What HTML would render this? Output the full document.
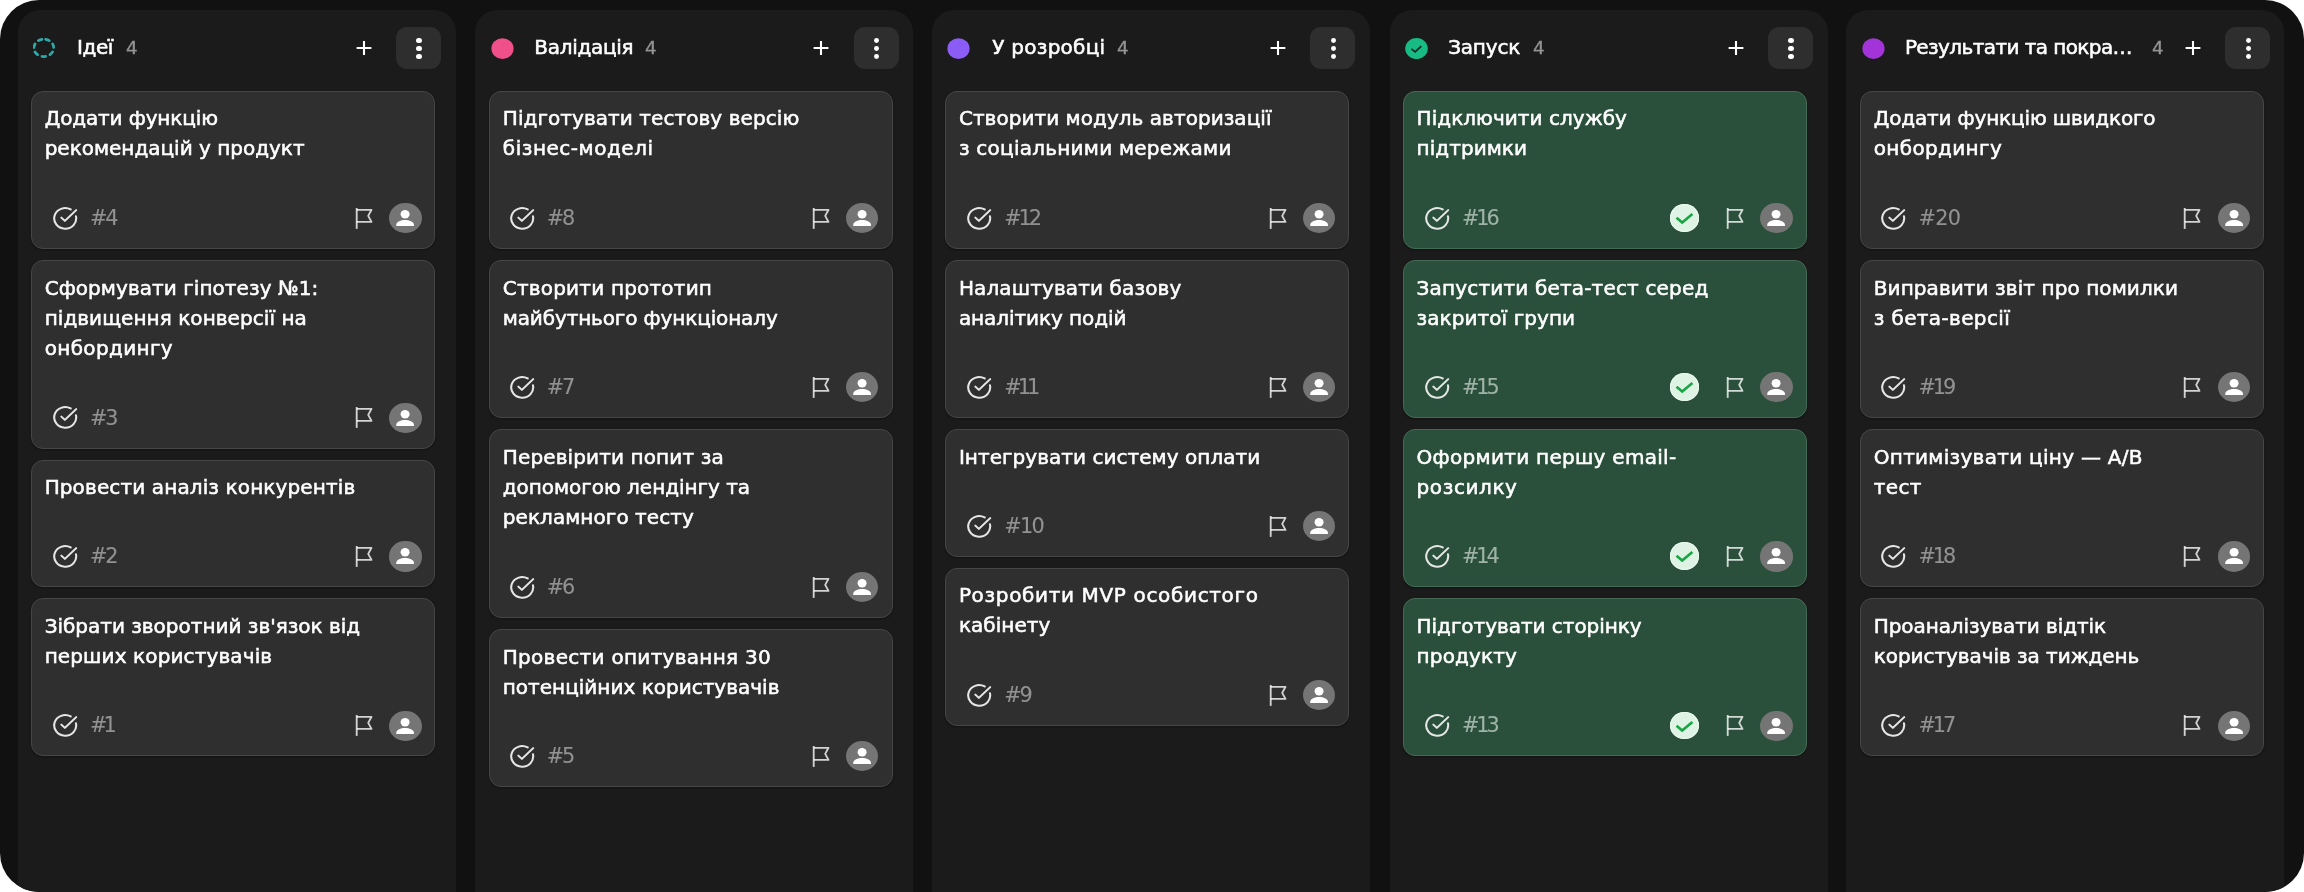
<!DOCTYPE html><html lang="uk"><head><meta charset="utf-8"><title>Kanban</title><style>
*{box-sizing:border-box;margin:0;padding:0}
html,body{width:2304px;height:892px;background:#fff;overflow:hidden}
body{font-family:"DejaVu Sans","Liberation Sans",sans-serif;color:#fff}
#board{position:absolute;left:0;top:0;width:2304px;height:892px;background:#111;border-radius:39px;overflow:hidden}
.col{will-change:transform;position:absolute;top:10px;height:920px;width:437.5px;background:#1b1b1b;border-radius:22px}
.hd{position:absolute;top:0;width:437px;height:80px}
.ttl{position:absolute;left:59.1px;top:24.9px;font-size:20px;-webkit-text-stroke:0.55px #fff;line-height:24px;white-space:nowrap;color:#fff}
.cnt{position:absolute;top:25.8px;font-size:17px;line-height:24px;color:#939393;-webkit-text-stroke:0.3px #939393;transform:scaleX(1.08);transform-origin:0 50%}
.ico{position:absolute;left:15.2px;top:27.7px;width:23px;height:21.2px}
.plus{position:absolute;top:30.1px;width:16px;height:16px}
.more{position:absolute;left:378.3px;top:17.2px;width:44.9px;height:41.5px;border-radius:11px;background:#2e2e2e}
.more i{position:absolute;left:20.1px;width:5.2px;height:5px;border-radius:50%;background:#fff}
.card{position:absolute;width:404px;background:#2f2f2f;border:1px solid #464646;border-radius:12px;box-shadow:0 1px 2px rgba(0,0,0,.35)}
.card.g{background:#2a503b;border-color:#456a56}
.l{position:absolute;left:12.6px;font-size:20px;-webkit-text-stroke:0.55px #fff;line-height:30px;height:30px;white-space:nowrap;color:#fff}
.tk{position:absolute;left:19.8px;width:26.4px;height:24.8px}
.num{position:absolute;left:57.9px;font-size:20.8px;line-height:24px;letter-spacing:-0.7px;-webkit-text-stroke:0.1px;color:#929292;white-space:nowrap}
.card.g .num{color:#9fb3a7}
.flag{position:absolute;left:322px;width:20px;height:24px}
.av{position:absolute;left:357.4px;width:32.2px;height:30.2px;border-radius:50%;background:#757575;overflow:hidden}
.ok{position:absolute;left:266.7px;width:29px;height:27.6px;border-radius:50%;background:#def3e4;box-shadow:inset 0 0 0 1px #e9faee}
</style></head><body><div id="board">
<div class="col" style="left:18.05px">
<div class="hd" style="left:0px">
<svg class="ico" viewBox="0 0 23 21.2" fill="none"><ellipse cx="10.8" cy="9.9" rx="8.7" ry="9.9" transform="rotate(-93 10.8 9.9)" stroke="#2eaaab" stroke-width="2.7" stroke-linecap="round" stroke-dasharray="3.7 4.72" stroke-dashoffset="-2.4"/></svg>
<div class="ttl" style="left:59.1px;letter-spacing:-0.433px">Ідеї</div>
<div class="cnt" style="left:108.0px">4</div>
<svg class="plus" style="left:337.8px" viewBox="0 0 16 16" fill="none" stroke="#fff" stroke-width="2.1" stroke-linecap="butt"><path d="M8 1.1v13.8M0.6 8h14.8"/></svg>
<div class="more"><i style="top:10.6px"></i><i style="top:18.6px"></i><i style="top:26.6px"></i></div>
</div>
<div class="card" style="left:13.05px;top:80.60px;height:158.3px">
<div class="l" style="top:11.56px;letter-spacing:-0.13px">Додати функцію</div>
<div class="l" style="top:41.56px;letter-spacing:-0.002px">рекомендацій у продукт</div>
<svg class="tk" style="top:114.2px;margin-left:0px" preserveAspectRatio="none" viewBox="0 0 24 24" fill="none" stroke="#e6e6e6" stroke-width="1.9" stroke-linecap="round" stroke-linejoin="round"><path d="M21.8 10A10 10 0 1 1 17 3.34"/><path d="M8.5 11.2l3.2 3.2L22 4"/></svg>
<div class="num" style="top:114.3px;margin-left:0px;letter-spacing:-2.15px">#4</div>
<svg class="flag" style="top:114.1px;margin-left:0px" viewBox="0 0 20 24" fill="none" stroke="rgba(255,255,255,.79)" stroke-width="1.85" stroke-linejoin="round" stroke-linecap="butt"><path d="M2.7 2v20.9"/><path d="M2.7 3.8H17.5L14.2 9.9l3.3 6H2.7"/></svg>
<div class="av" style="top:111.4px;margin-left:0px"><svg width="32.2" height="30.2" preserveAspectRatio="none" viewBox="0 0 33 33" style="display:block"><circle cx="16.5" cy="12.3" r="4.6" fill="#fff"/><path d="M7.4 24.2c0-4 5-5.6 9.1-5.6s9.1 1.6 9.1 5.6v0.9H7.4z" fill="#fff"/></svg></div>
</div>
<div class="card" style="left:13.05px;top:249.80px;height:188.8px">
<div class="l" style="top:12.36px;letter-spacing:0.059px">Сформувати гіпотезу №1:</div>
<div class="l" style="top:42.36px;letter-spacing:0.058px">підвищення конверсії на</div>
<div class="l" style="top:72.36px;letter-spacing:0.348px">онбордингу</div>
<svg class="tk" style="top:144.7px;margin-left:0px" preserveAspectRatio="none" viewBox="0 0 24 24" fill="none" stroke="#e6e6e6" stroke-width="1.9" stroke-linecap="round" stroke-linejoin="round"><path d="M21.8 10A10 10 0 1 1 17 3.34"/><path d="M8.5 11.2l3.2 3.2L22 4"/></svg>
<div class="num" style="top:144.8px;margin-left:0px;letter-spacing:-2.15px">#3</div>
<svg class="flag" style="top:144.6px;margin-left:0px" viewBox="0 0 20 24" fill="none" stroke="rgba(255,255,255,.79)" stroke-width="1.85" stroke-linejoin="round" stroke-linecap="butt"><path d="M2.7 2v20.9"/><path d="M2.7 3.8H17.5L14.2 9.9l3.3 6H2.7"/></svg>
<div class="av" style="top:141.9px;margin-left:0px"><svg width="32.2" height="30.2" preserveAspectRatio="none" viewBox="0 0 33 33" style="display:block"><circle cx="16.5" cy="12.3" r="4.6" fill="#fff"/><path d="M7.4 24.2c0-4 5-5.6 9.1-5.6s9.1 1.6 9.1 5.6v0.9H7.4z" fill="#fff"/></svg></div>
</div>
<div class="card" style="left:13.05px;top:449.50px;height:127.8px">
<div class="l" style="top:11.66px;letter-spacing:0.123px">Провести аналіз конкурентів</div>
<svg class="tk" style="top:83.7px;margin-left:0px" preserveAspectRatio="none" viewBox="0 0 24 24" fill="none" stroke="#e6e6e6" stroke-width="1.9" stroke-linecap="round" stroke-linejoin="round"><path d="M21.8 10A10 10 0 1 1 17 3.34"/><path d="M8.5 11.2l3.2 3.2L22 4"/></svg>
<div class="num" style="top:83.8px;margin-left:0px;letter-spacing:-2.15px">#2</div>
<svg class="flag" style="top:83.6px;margin-left:0px" viewBox="0 0 20 24" fill="none" stroke="rgba(255,255,255,.79)" stroke-width="1.85" stroke-linejoin="round" stroke-linecap="butt"><path d="M2.7 2v20.9"/><path d="M2.7 3.8H17.5L14.2 9.9l3.3 6H2.7"/></svg>
<div class="av" style="top:80.9px;margin-left:0px"><svg width="32.2" height="30.2" preserveAspectRatio="none" viewBox="0 0 33 33" style="display:block"><circle cx="16.5" cy="12.3" r="4.6" fill="#fff"/><path d="M7.4 24.2c0-4 5-5.6 9.1-5.6s9.1 1.6 9.1 5.6v0.9H7.4z" fill="#fff"/></svg></div>
</div>
<div class="card" style="left:13.05px;top:588.20px;height:158.3px">
<div class="l" style="top:11.96px;letter-spacing:-0.012px">Зібрати зворотний зв'язок від</div>
<div class="l" style="top:41.96px;letter-spacing:0.125px">перших користувачів</div>
<svg class="tk" style="top:114.2px;margin-left:0px" preserveAspectRatio="none" viewBox="0 0 24 24" fill="none" stroke="#e6e6e6" stroke-width="1.9" stroke-linecap="round" stroke-linejoin="round"><path d="M21.8 10A10 10 0 1 1 17 3.34"/><path d="M8.5 11.2l3.2 3.2L22 4"/></svg>
<div class="num" style="top:114.3px;margin-left:0px;letter-spacing:-3.8px">#1</div>
<svg class="flag" style="top:114.1px;margin-left:0px" viewBox="0 0 20 24" fill="none" stroke="rgba(255,255,255,.79)" stroke-width="1.85" stroke-linejoin="round" stroke-linecap="butt"><path d="M2.7 2v20.9"/><path d="M2.7 3.8H17.5L14.2 9.9l3.3 6H2.7"/></svg>
<div class="av" style="top:111.4px;margin-left:0px"><svg width="32.2" height="30.2" preserveAspectRatio="none" viewBox="0 0 33 33" style="display:block"><circle cx="16.5" cy="12.3" r="4.6" fill="#fff"/><path d="M7.4 24.2c0-4 5-5.6 9.1-5.6s9.1 1.6 9.1 5.6v0.9H7.4z" fill="#fff"/></svg></div>
</div>
</div>
<div class="col" style="left:474.5px">
<div class="hd" style="left:0.7px">
<svg class="ico" viewBox="0 0 23 21.2"><ellipse cx="11.5" cy="10.6" rx="11.1" ry="10.4" fill="#f0508a"/></svg>
<div class="ttl" style="left:58.6px;letter-spacing:-0.3px">Валідація</div>
<div class="cnt" style="left:169.6px">4</div>
<svg class="plus" style="left:337.8px" viewBox="0 0 16 16" fill="none" stroke="#fff" stroke-width="2.1" stroke-linecap="butt"><path d="M8 1.1v13.8M0.6 8h14.8"/></svg>
<div class="more"><i style="top:10.6px"></i><i style="top:18.6px"></i><i style="top:26.6px"></i></div>
</div>
<div class="card" style="left:14.20px;top:80.60px;height:158.3px">
<div class="l" style="top:11.56px;letter-spacing:0.07px">Підготувати тестову версію</div>
<div class="l" style="top:41.56px;letter-spacing:0.531px">бізнес-моделі</div>
<svg class="tk" style="top:114.2px;margin-left:-1.3px" preserveAspectRatio="none" viewBox="0 0 24 24" fill="none" stroke="#e6e6e6" stroke-width="1.9" stroke-linecap="round" stroke-linejoin="round"><path d="M21.8 10A10 10 0 1 1 17 3.34"/><path d="M8.5 11.2l3.2 3.2L22 4"/></svg>
<div class="num" style="top:114.3px;margin-left:-1.3px;letter-spacing:-2.15px">#8</div>
<svg class="flag" style="top:114.1px;margin-left:-1.5px" viewBox="0 0 20 24" fill="none" stroke="rgba(255,255,255,.79)" stroke-width="1.85" stroke-linejoin="round" stroke-linecap="butt"><path d="M2.7 2v20.9"/><path d="M2.7 3.8H17.5L14.2 9.9l3.3 6H2.7"/></svg>
<div class="av" style="top:111.4px;margin-left:-1.5px"><svg width="32.2" height="30.2" preserveAspectRatio="none" viewBox="0 0 33 33" style="display:block"><circle cx="16.5" cy="12.3" r="4.6" fill="#fff"/><path d="M7.4 24.2c0-4 5-5.6 9.1-5.6s9.1 1.6 9.1 5.6v0.9H7.4z" fill="#fff"/></svg></div>
</div>
<div class="card" style="left:14.20px;top:249.80px;height:158.3px">
<div class="l" style="top:12.36px;letter-spacing:0.198px">Створити прототип</div>
<div class="l" style="top:42.36px;letter-spacing:-0.13px">майбутнього функціоналу</div>
<svg class="tk" style="top:114.2px;margin-left:-1.3px" preserveAspectRatio="none" viewBox="0 0 24 24" fill="none" stroke="#e6e6e6" stroke-width="1.9" stroke-linecap="round" stroke-linejoin="round"><path d="M21.8 10A10 10 0 1 1 17 3.34"/><path d="M8.5 11.2l3.2 3.2L22 4"/></svg>
<div class="num" style="top:114.3px;margin-left:-1.3px;letter-spacing:-2.15px">#7</div>
<svg class="flag" style="top:114.1px;margin-left:-1.5px" viewBox="0 0 20 24" fill="none" stroke="rgba(255,255,255,.79)" stroke-width="1.85" stroke-linejoin="round" stroke-linecap="butt"><path d="M2.7 2v20.9"/><path d="M2.7 3.8H17.5L14.2 9.9l3.3 6H2.7"/></svg>
<div class="av" style="top:111.4px;margin-left:-1.5px"><svg width="32.2" height="30.2" preserveAspectRatio="none" viewBox="0 0 33 33" style="display:block"><circle cx="16.5" cy="12.3" r="4.6" fill="#fff"/><path d="M7.4 24.2c0-4 5-5.6 9.1-5.6s9.1 1.6 9.1 5.6v0.9H7.4z" fill="#fff"/></svg></div>
</div>
<div class="card" style="left:14.20px;top:419.00px;height:188.8px">
<div class="l" style="top:12.16px;letter-spacing:0.126px">Перевірити попит за</div>
<div class="l" style="top:42.16px;letter-spacing:-0.03px">допомогою лендінгу та</div>
<div class="l" style="top:72.16px;letter-spacing:0.064px">рекламного тесту</div>
<svg class="tk" style="top:144.7px;margin-left:-1.3px" preserveAspectRatio="none" viewBox="0 0 24 24" fill="none" stroke="#e6e6e6" stroke-width="1.9" stroke-linecap="round" stroke-linejoin="round"><path d="M21.8 10A10 10 0 1 1 17 3.34"/><path d="M8.5 11.2l3.2 3.2L22 4"/></svg>
<div class="num" style="top:144.8px;margin-left:-1.3px;letter-spacing:-2.15px">#6</div>
<svg class="flag" style="top:144.6px;margin-left:-1.5px" viewBox="0 0 20 24" fill="none" stroke="rgba(255,255,255,.79)" stroke-width="1.85" stroke-linejoin="round" stroke-linecap="butt"><path d="M2.7 2v20.9"/><path d="M2.7 3.8H17.5L14.2 9.9l3.3 6H2.7"/></svg>
<div class="av" style="top:141.9px;margin-left:-1.5px"><svg width="32.2" height="30.2" preserveAspectRatio="none" viewBox="0 0 33 33" style="display:block"><circle cx="16.5" cy="12.3" r="4.6" fill="#fff"/><path d="M7.4 24.2c0-4 5-5.6 9.1-5.6s9.1 1.6 9.1 5.6v0.9H7.4z" fill="#fff"/></svg></div>
</div>
<div class="card" style="left:14.20px;top:618.70px;height:158.3px">
<div class="l" style="top:12.46px;letter-spacing:0.291px">Провести опитування 30</div>
<div class="l" style="top:42.46px;letter-spacing:0.007px">потенційних користувачів</div>
<svg class="tk" style="top:114.2px;margin-left:-1.3px" preserveAspectRatio="none" viewBox="0 0 24 24" fill="none" stroke="#e6e6e6" stroke-width="1.9" stroke-linecap="round" stroke-linejoin="round"><path d="M21.8 10A10 10 0 1 1 17 3.34"/><path d="M8.5 11.2l3.2 3.2L22 4"/></svg>
<div class="num" style="top:114.3px;margin-left:-1.3px;letter-spacing:-2.15px">#5</div>
<svg class="flag" style="top:114.1px;margin-left:-1.5px" viewBox="0 0 20 24" fill="none" stroke="rgba(255,255,255,.79)" stroke-width="1.85" stroke-linejoin="round" stroke-linecap="butt"><path d="M2.7 2v20.9"/><path d="M2.7 3.8H17.5L14.2 9.9l3.3 6H2.7"/></svg>
<div class="av" style="top:111.4px;margin-left:-1.5px"><svg width="32.2" height="30.2" preserveAspectRatio="none" viewBox="0 0 33 33" style="display:block"><circle cx="16.5" cy="12.3" r="4.6" fill="#fff"/><path d="M7.4 24.2c0-4 5-5.6 9.1-5.6s9.1 1.6 9.1 5.6v0.9H7.4z" fill="#fff"/></svg></div>
</div>
</div>
<div class="col" style="left:931.8px">
<div class="hd" style="left:0.2px">
<svg class="ico" viewBox="0 0 23 21.2"><ellipse cx="11.5" cy="10.6" rx="11.1" ry="10.4" fill="#8b5cf6"/></svg>
<div class="ttl" style="left:60.0px;letter-spacing:0.267px">У розробці</div>
<div class="cnt" style="left:185.0px">4</div>
<svg class="plus" style="left:337.8px" viewBox="0 0 16 16" fill="none" stroke="#fff" stroke-width="2.1" stroke-linecap="butt"><path d="M8 1.1v13.8M0.6 8h14.8"/></svg>
<div class="more"><i style="top:10.6px"></i><i style="top:18.6px"></i><i style="top:26.6px"></i></div>
</div>
<div class="card" style="left:13.30px;top:80.60px;height:158.3px">
<div class="l" style="top:11.56px;letter-spacing:0.042px">Створити модуль авторизації</div>
<div class="l" style="top:41.56px;letter-spacing:0.238px">з соціальними мережами</div>
<svg class="tk" style="top:114.2px;margin-left:0px" preserveAspectRatio="none" viewBox="0 0 24 24" fill="none" stroke="#e6e6e6" stroke-width="1.9" stroke-linecap="round" stroke-linejoin="round"><path d="M21.8 10A10 10 0 1 1 17 3.34"/><path d="M8.5 11.2l3.2 3.2L22 4"/></svg>
<div class="num" style="top:114.3px;margin-left:0px;letter-spacing:-3.05px">#12</div>
<svg class="flag" style="top:114.1px;margin-left:-0.5px" viewBox="0 0 20 24" fill="none" stroke="rgba(255,255,255,.79)" stroke-width="1.85" stroke-linejoin="round" stroke-linecap="butt"><path d="M2.7 2v20.9"/><path d="M2.7 3.8H17.5L14.2 9.9l3.3 6H2.7"/></svg>
<div class="av" style="top:111.4px;margin-left:-0.5px"><svg width="32.2" height="30.2" preserveAspectRatio="none" viewBox="0 0 33 33" style="display:block"><circle cx="16.5" cy="12.3" r="4.6" fill="#fff"/><path d="M7.4 24.2c0-4 5-5.6 9.1-5.6s9.1 1.6 9.1 5.6v0.9H7.4z" fill="#fff"/></svg></div>
</div>
<div class="card" style="left:13.30px;top:249.80px;height:158.3px">
<div class="l" style="top:12.36px;letter-spacing:0.126px">Налаштувати базову</div>
<div class="l" style="top:42.36px;letter-spacing:-0.071px">аналітику подій</div>
<svg class="tk" style="top:114.2px;margin-left:0px" preserveAspectRatio="none" viewBox="0 0 24 24" fill="none" stroke="#e6e6e6" stroke-width="1.9" stroke-linecap="round" stroke-linejoin="round"><path d="M21.8 10A10 10 0 1 1 17 3.34"/><path d="M8.5 11.2l3.2 3.2L22 4"/></svg>
<div class="num" style="top:114.3px;margin-left:0px;letter-spacing:-3.9px">#11</div>
<svg class="flag" style="top:114.1px;margin-left:-0.5px" viewBox="0 0 20 24" fill="none" stroke="rgba(255,255,255,.79)" stroke-width="1.85" stroke-linejoin="round" stroke-linecap="butt"><path d="M2.7 2v20.9"/><path d="M2.7 3.8H17.5L14.2 9.9l3.3 6H2.7"/></svg>
<div class="av" style="top:111.4px;margin-left:-0.5px"><svg width="32.2" height="30.2" preserveAspectRatio="none" viewBox="0 0 33 33" style="display:block"><circle cx="16.5" cy="12.3" r="4.6" fill="#fff"/><path d="M7.4 24.2c0-4 5-5.6 9.1-5.6s9.1 1.6 9.1 5.6v0.9H7.4z" fill="#fff"/></svg></div>
</div>
<div class="card" style="left:13.30px;top:419.00px;height:127.8px">
<div class="l" style="top:12.16px;letter-spacing:0.044px">Інтегрувати систему оплати</div>
<svg class="tk" style="top:83.7px;margin-left:0px" preserveAspectRatio="none" viewBox="0 0 24 24" fill="none" stroke="#e6e6e6" stroke-width="1.9" stroke-linecap="round" stroke-linejoin="round"><path d="M21.8 10A10 10 0 1 1 17 3.34"/><path d="M8.5 11.2l3.2 3.2L22 4"/></svg>
<div class="num" style="top:83.8px;margin-left:0px;letter-spacing:-1.7px">#10</div>
<svg class="flag" style="top:83.6px;margin-left:-0.5px" viewBox="0 0 20 24" fill="none" stroke="rgba(255,255,255,.79)" stroke-width="1.85" stroke-linejoin="round" stroke-linecap="butt"><path d="M2.7 2v20.9"/><path d="M2.7 3.8H17.5L14.2 9.9l3.3 6H2.7"/></svg>
<div class="av" style="top:80.9px;margin-left:-0.5px"><svg width="32.2" height="30.2" preserveAspectRatio="none" viewBox="0 0 33 33" style="display:block"><circle cx="16.5" cy="12.3" r="4.6" fill="#fff"/><path d="M7.4 24.2c0-4 5-5.6 9.1-5.6s9.1 1.6 9.1 5.6v0.9H7.4z" fill="#fff"/></svg></div>
</div>
<div class="card" style="left:13.30px;top:557.70px;height:158.3px">
<div class="l" style="top:11.46px;letter-spacing:0.652px">Розробити MVP особистого</div>
<div class="l" style="top:41.46px;letter-spacing:0.038px">кабінету</div>
<svg class="tk" style="top:114.2px;margin-left:0px" preserveAspectRatio="none" viewBox="0 0 24 24" fill="none" stroke="#e6e6e6" stroke-width="1.9" stroke-linecap="round" stroke-linejoin="round"><path d="M21.8 10A10 10 0 1 1 17 3.34"/><path d="M8.5 11.2l3.2 3.2L22 4"/></svg>
<div class="num" style="top:114.3px;margin-left:0px;letter-spacing:-2.15px">#9</div>
<svg class="flag" style="top:114.1px;margin-left:-0.5px" viewBox="0 0 20 24" fill="none" stroke="rgba(255,255,255,.79)" stroke-width="1.85" stroke-linejoin="round" stroke-linecap="butt"><path d="M2.7 2v20.9"/><path d="M2.7 3.8H17.5L14.2 9.9l3.3 6H2.7"/></svg>
<div class="av" style="top:111.4px;margin-left:-0.5px"><svg width="32.2" height="30.2" preserveAspectRatio="none" viewBox="0 0 33 33" style="display:block"><circle cx="16.5" cy="12.3" r="4.6" fill="#fff"/><path d="M7.4 24.2c0-4 5-5.6 9.1-5.6s9.1 1.6 9.1 5.6v0.9H7.4z" fill="#fff"/></svg></div>
</div>
</div>
<div class="col" style="left:1390.0px">
<div class="hd" style="left:0px">
<svg class="ico" viewBox="0 0 23 21.2" fill="none"><ellipse cx="11.5" cy="10.6" rx="11.3" ry="10.5" fill="#19bb84"/><path d="M6.4 10.9l3.7 3.0 6.2-5.8" stroke="#0f2a20" stroke-width="1.8" stroke-linecap="butt" stroke-linejoin="miter"/></svg>
<div class="ttl" style="left:58.2px;letter-spacing:-0.2px">Запуск</div>
<div class="cnt" style="left:142.6px">4</div>
<svg class="plus" style="left:337.8px" viewBox="0 0 16 16" fill="none" stroke="#fff" stroke-width="2.1" stroke-linecap="butt"><path d="M8 1.1v13.8M0.6 8h14.8"/></svg>
<div class="more"><i style="top:10.6px"></i><i style="top:18.6px"></i><i style="top:26.6px"></i></div>
</div>
<div class="card g" style="left:13.00px;top:80.60px;height:158.3px">
<div class="l" style="top:11.56px;letter-spacing:0.037px">Підключити службу</div>
<div class="l" style="top:41.56px;letter-spacing:0.046px">підтримки</div>
<svg class="tk" style="top:114.2px;margin-left:0px" preserveAspectRatio="none" viewBox="0 0 24 24" fill="none" stroke="#e6e6e6" stroke-width="1.9" stroke-linecap="round" stroke-linejoin="round"><path d="M21.8 10A10 10 0 1 1 17 3.34"/><path d="M8.5 11.2l3.2 3.2L22 4"/></svg>
<div class="num" style="top:114.3px;margin-left:0px;letter-spacing:-3.05px">#16</div>
<div class="ok" style="top:112.4px;margin-left:-1.0px"><svg width="29" height="27.6" viewBox="0 0 29 27.6" fill="none" stroke="#1aa544" stroke-width="2.6" stroke-linecap="butt" stroke-linejoin="miter" style="display:block"><path d="M6.5 13.8l5.7 4.8 10.2-8.7"/></svg></div>
<svg class="flag" style="top:114.1px;margin-left:-1.0px" viewBox="0 0 20 24" fill="none" stroke="rgba(255,255,255,.79)" stroke-width="1.85" stroke-linejoin="round" stroke-linecap="butt"><path d="M2.7 2v20.9"/><path d="M2.7 3.8H17.5L14.2 9.9l3.3 6H2.7"/></svg>
<div class="av" style="top:111.4px;margin-left:-1.0px"><svg width="32.2" height="30.2" preserveAspectRatio="none" viewBox="0 0 33 33" style="display:block"><circle cx="16.5" cy="12.3" r="4.6" fill="#fff"/><path d="M7.4 24.2c0-4 5-5.6 9.1-5.6s9.1 1.6 9.1 5.6v0.9H7.4z" fill="#fff"/></svg></div>
</div>
<div class="card g" style="left:13.00px;top:249.80px;height:158.3px">
<div class="l" style="top:12.36px;letter-spacing:0.173px">Запустити бета-тест серед</div>
<div class="l" style="top:42.36px;letter-spacing:0.066px">закритої групи</div>
<svg class="tk" style="top:114.2px;margin-left:0px" preserveAspectRatio="none" viewBox="0 0 24 24" fill="none" stroke="#e6e6e6" stroke-width="1.9" stroke-linecap="round" stroke-linejoin="round"><path d="M21.8 10A10 10 0 1 1 17 3.34"/><path d="M8.5 11.2l3.2 3.2L22 4"/></svg>
<div class="num" style="top:114.3px;margin-left:0px;letter-spacing:-3.05px">#15</div>
<div class="ok" style="top:112.4px;margin-left:-1.0px"><svg width="29" height="27.6" viewBox="0 0 29 27.6" fill="none" stroke="#1aa544" stroke-width="2.6" stroke-linecap="butt" stroke-linejoin="miter" style="display:block"><path d="M6.5 13.8l5.7 4.8 10.2-8.7"/></svg></div>
<svg class="flag" style="top:114.1px;margin-left:-1.0px" viewBox="0 0 20 24" fill="none" stroke="rgba(255,255,255,.79)" stroke-width="1.85" stroke-linejoin="round" stroke-linecap="butt"><path d="M2.7 2v20.9"/><path d="M2.7 3.8H17.5L14.2 9.9l3.3 6H2.7"/></svg>
<div class="av" style="top:111.4px;margin-left:-1.0px"><svg width="32.2" height="30.2" preserveAspectRatio="none" viewBox="0 0 33 33" style="display:block"><circle cx="16.5" cy="12.3" r="4.6" fill="#fff"/><path d="M7.4 24.2c0-4 5-5.6 9.1-5.6s9.1 1.6 9.1 5.6v0.9H7.4z" fill="#fff"/></svg></div>
</div>
<div class="card g" style="left:13.00px;top:419.00px;height:158.3px">
<div class="l" style="top:12.16px;letter-spacing:0.289px">Оформити першу email-</div>
<div class="l" style="top:42.16px;letter-spacing:0.581px">розсилку</div>
<svg class="tk" style="top:114.2px;margin-left:0px" preserveAspectRatio="none" viewBox="0 0 24 24" fill="none" stroke="#e6e6e6" stroke-width="1.9" stroke-linecap="round" stroke-linejoin="round"><path d="M21.8 10A10 10 0 1 1 17 3.34"/><path d="M8.5 11.2l3.2 3.2L22 4"/></svg>
<div class="num" style="top:114.3px;margin-left:0px;letter-spacing:-3.05px">#14</div>
<div class="ok" style="top:112.4px;margin-left:-1.0px"><svg width="29" height="27.6" viewBox="0 0 29 27.6" fill="none" stroke="#1aa544" stroke-width="2.6" stroke-linecap="butt" stroke-linejoin="miter" style="display:block"><path d="M6.5 13.8l5.7 4.8 10.2-8.7"/></svg></div>
<svg class="flag" style="top:114.1px;margin-left:-1.0px" viewBox="0 0 20 24" fill="none" stroke="rgba(255,255,255,.79)" stroke-width="1.85" stroke-linejoin="round" stroke-linecap="butt"><path d="M2.7 2v20.9"/><path d="M2.7 3.8H17.5L14.2 9.9l3.3 6H2.7"/></svg>
<div class="av" style="top:111.4px;margin-left:-1.0px"><svg width="32.2" height="30.2" preserveAspectRatio="none" viewBox="0 0 33 33" style="display:block"><circle cx="16.5" cy="12.3" r="4.6" fill="#fff"/><path d="M7.4 24.2c0-4 5-5.6 9.1-5.6s9.1 1.6 9.1 5.6v0.9H7.4z" fill="#fff"/></svg></div>
</div>
<div class="card g" style="left:13.00px;top:588.20px;height:158.3px">
<div class="l" style="top:11.96px;letter-spacing:-0.038px">Підготувати сторінку</div>
<div class="l" style="top:41.96px;letter-spacing:0.153px">продукту</div>
<svg class="tk" style="top:114.2px;margin-left:0px" preserveAspectRatio="none" viewBox="0 0 24 24" fill="none" stroke="#e6e6e6" stroke-width="1.9" stroke-linecap="round" stroke-linejoin="round"><path d="M21.8 10A10 10 0 1 1 17 3.34"/><path d="M8.5 11.2l3.2 3.2L22 4"/></svg>
<div class="num" style="top:114.3px;margin-left:0px;letter-spacing:-3.05px">#13</div>
<div class="ok" style="top:112.4px;margin-left:-1.0px"><svg width="29" height="27.6" viewBox="0 0 29 27.6" fill="none" stroke="#1aa544" stroke-width="2.6" stroke-linecap="butt" stroke-linejoin="miter" style="display:block"><path d="M6.5 13.8l5.7 4.8 10.2-8.7"/></svg></div>
<svg class="flag" style="top:114.1px;margin-left:-1.0px" viewBox="0 0 20 24" fill="none" stroke="rgba(255,255,255,.79)" stroke-width="1.85" stroke-linejoin="round" stroke-linecap="butt"><path d="M2.7 2v20.9"/><path d="M2.7 3.8H17.5L14.2 9.9l3.3 6H2.7"/></svg>
<div class="av" style="top:111.4px;margin-left:-1.0px"><svg width="32.2" height="30.2" preserveAspectRatio="none" viewBox="0 0 33 33" style="display:block"><circle cx="16.5" cy="12.3" r="4.6" fill="#fff"/><path d="M7.4 24.2c0-4 5-5.6 9.1-5.6s9.1 1.6 9.1 5.6v0.9H7.4z" fill="#fff"/></svg></div>
</div>
</div>
<div class="col" style="left:1846.1px">
<div class="hd" style="left:1.2px">
<svg class="ico" viewBox="0 0 23 21.2"><ellipse cx="11.5" cy="10.6" rx="11.1" ry="10.4" fill="#a234d9"/></svg>
<div class="ttl" style="left:57.7px;letter-spacing:-0.589px">Результати та покра…</div>
<div class="cnt" style="left:304.7px">4</div>
<svg class="plus" style="left:337.8px" viewBox="0 0 16 16" fill="none" stroke="#fff" stroke-width="2.1" stroke-linecap="butt"><path d="M8 1.1v13.8M0.6 8h14.8"/></svg>
<div class="more"><i style="top:10.6px"></i><i style="top:18.6px"></i><i style="top:26.6px"></i></div>
</div>
<div class="card" style="left:14.20px;top:80.60px;height:158.3px">
<div class="l" style="top:11.56px;letter-spacing:-0.163px">Додати функцію швидкого</div>
<div class="l" style="top:41.56px;letter-spacing:0.348px">онбордингу</div>
<svg class="tk" style="top:114.2px;margin-left:-0.6px" preserveAspectRatio="none" viewBox="0 0 24 24" fill="none" stroke="#e6e6e6" stroke-width="1.9" stroke-linecap="round" stroke-linejoin="round"><path d="M21.8 10A10 10 0 1 1 17 3.34"/><path d="M8.5 11.2l3.2 3.2L22 4"/></svg>
<div class="num" style="top:114.3px;margin-left:-0.6px;letter-spacing:-0.7px">#20</div>
<svg class="flag" style="top:114.1px;margin-left:-1.0px" viewBox="0 0 20 24" fill="none" stroke="rgba(255,255,255,.79)" stroke-width="1.85" stroke-linejoin="round" stroke-linecap="butt"><path d="M2.7 2v20.9"/><path d="M2.7 3.8H17.5L14.2 9.9l3.3 6H2.7"/></svg>
<div class="av" style="top:111.4px;margin-left:-1.0px"><svg width="32.2" height="30.2" preserveAspectRatio="none" viewBox="0 0 33 33" style="display:block"><circle cx="16.5" cy="12.3" r="4.6" fill="#fff"/><path d="M7.4 24.2c0-4 5-5.6 9.1-5.6s9.1 1.6 9.1 5.6v0.9H7.4z" fill="#fff"/></svg></div>
</div>
<div class="card" style="left:14.20px;top:249.80px;height:158.3px">
<div class="l" style="top:12.36px;letter-spacing:0.079px">Виправити звіт про помилки</div>
<div class="l" style="top:42.36px;letter-spacing:0.356px">з бета-версії</div>
<svg class="tk" style="top:114.2px;margin-left:-0.6px" preserveAspectRatio="none" viewBox="0 0 24 24" fill="none" stroke="#e6e6e6" stroke-width="1.9" stroke-linecap="round" stroke-linejoin="round"><path d="M21.8 10A10 10 0 1 1 17 3.34"/><path d="M8.5 11.2l3.2 3.2L22 4"/></svg>
<div class="num" style="top:114.3px;margin-left:-0.6px;letter-spacing:-3.05px">#19</div>
<svg class="flag" style="top:114.1px;margin-left:-1.0px" viewBox="0 0 20 24" fill="none" stroke="rgba(255,255,255,.79)" stroke-width="1.85" stroke-linejoin="round" stroke-linecap="butt"><path d="M2.7 2v20.9"/><path d="M2.7 3.8H17.5L14.2 9.9l3.3 6H2.7"/></svg>
<div class="av" style="top:111.4px;margin-left:-1.0px"><svg width="32.2" height="30.2" preserveAspectRatio="none" viewBox="0 0 33 33" style="display:block"><circle cx="16.5" cy="12.3" r="4.6" fill="#fff"/><path d="M7.4 24.2c0-4 5-5.6 9.1-5.6s9.1 1.6 9.1 5.6v0.9H7.4z" fill="#fff"/></svg></div>
</div>
<div class="card" style="left:14.20px;top:419.00px;height:158.3px">
<div class="l" style="top:12.16px;letter-spacing:0.281px">Оптимізувати ціну — A/B</div>
<div class="l" style="top:42.16px;letter-spacing:0.376px">тест</div>
<svg class="tk" style="top:114.2px;margin-left:-0.6px" preserveAspectRatio="none" viewBox="0 0 24 24" fill="none" stroke="#e6e6e6" stroke-width="1.9" stroke-linecap="round" stroke-linejoin="round"><path d="M21.8 10A10 10 0 1 1 17 3.34"/><path d="M8.5 11.2l3.2 3.2L22 4"/></svg>
<div class="num" style="top:114.3px;margin-left:-0.6px;letter-spacing:-3.05px">#18</div>
<svg class="flag" style="top:114.1px;margin-left:-1.0px" viewBox="0 0 20 24" fill="none" stroke="rgba(255,255,255,.79)" stroke-width="1.85" stroke-linejoin="round" stroke-linecap="butt"><path d="M2.7 2v20.9"/><path d="M2.7 3.8H17.5L14.2 9.9l3.3 6H2.7"/></svg>
<div class="av" style="top:111.4px;margin-left:-1.0px"><svg width="32.2" height="30.2" preserveAspectRatio="none" viewBox="0 0 33 33" style="display:block"><circle cx="16.5" cy="12.3" r="4.6" fill="#fff"/><path d="M7.4 24.2c0-4 5-5.6 9.1-5.6s9.1 1.6 9.1 5.6v0.9H7.4z" fill="#fff"/></svg></div>
</div>
<div class="card" style="left:14.20px;top:588.20px;height:158.3px">
<div class="l" style="top:11.96px;letter-spacing:-0.083px">Проаналізувати відтік</div>
<div class="l" style="top:41.96px;letter-spacing:-0.061px">користувачів за тиждень</div>
<svg class="tk" style="top:114.2px;margin-left:-0.6px" preserveAspectRatio="none" viewBox="0 0 24 24" fill="none" stroke="#e6e6e6" stroke-width="1.9" stroke-linecap="round" stroke-linejoin="round"><path d="M21.8 10A10 10 0 1 1 17 3.34"/><path d="M8.5 11.2l3.2 3.2L22 4"/></svg>
<div class="num" style="top:114.3px;margin-left:-0.6px;letter-spacing:-3.05px">#17</div>
<svg class="flag" style="top:114.1px;margin-left:-1.0px" viewBox="0 0 20 24" fill="none" stroke="rgba(255,255,255,.79)" stroke-width="1.85" stroke-linejoin="round" stroke-linecap="butt"><path d="M2.7 2v20.9"/><path d="M2.7 3.8H17.5L14.2 9.9l3.3 6H2.7"/></svg>
<div class="av" style="top:111.4px;margin-left:-1.0px"><svg width="32.2" height="30.2" preserveAspectRatio="none" viewBox="0 0 33 33" style="display:block"><circle cx="16.5" cy="12.3" r="4.6" fill="#fff"/><path d="M7.4 24.2c0-4 5-5.6 9.1-5.6s9.1 1.6 9.1 5.6v0.9H7.4z" fill="#fff"/></svg></div>
</div>
</div>
</div></body></html>
